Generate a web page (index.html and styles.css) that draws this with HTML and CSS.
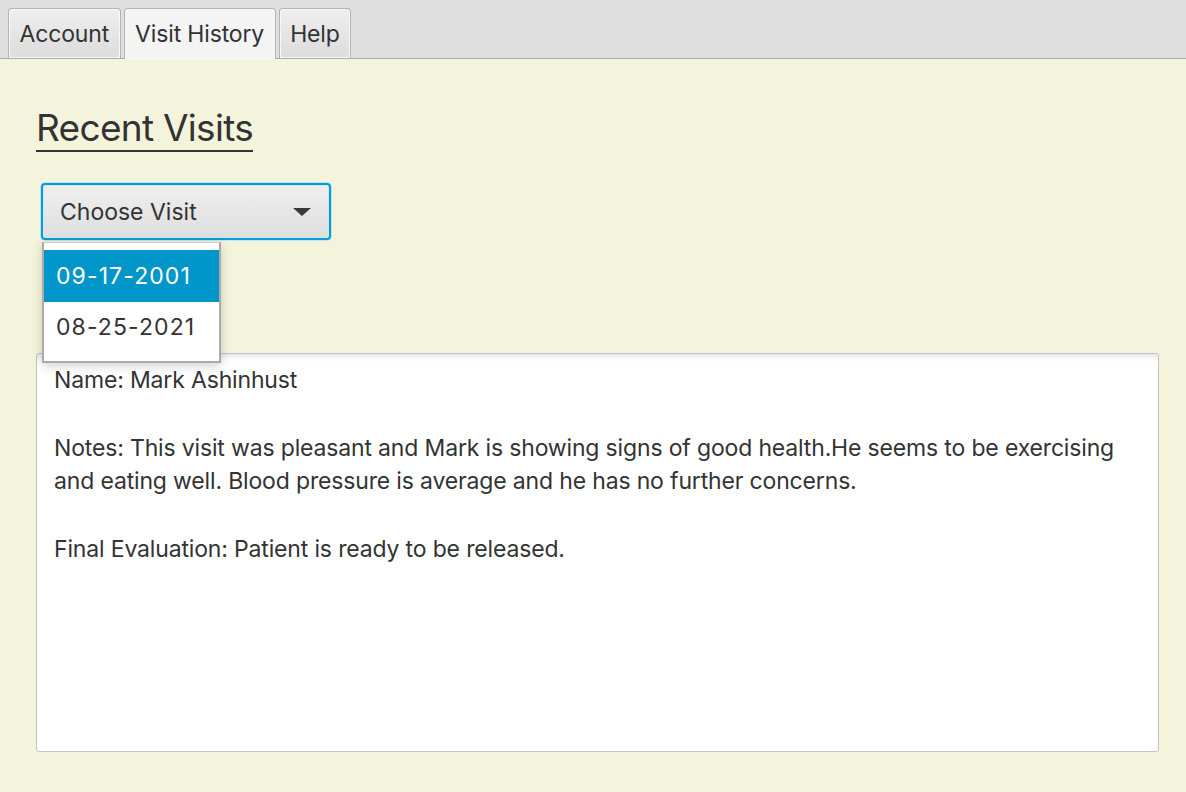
FILE: index.html
```html
<!DOCTYPE html>
<html>
<head>
<meta charset="utf-8">
<link rel="stylesheet" href="styles.css">
</head>
<body>
<div class="tabbar">
  <div class="tab">Account</div>
  <div class="tab selected">Visit History</div>
  <div class="tab">Help</div>
</div>
<main class="content">
  <h1 class="title">Recent Visits</h1>
  <div class="combo-wrap">
    <div class="combo">
      <span>Choose Visit</span>
      <svg class="arrow" width="18" height="8" viewBox="0 0 18 8"><path d="M0 0 H18 L9 8 Z" fill="#3a3a3a"/></svg>
    </div>
    <div class="popup">
      <div class="item sel">09-17-2001</div>
      <div class="item">08-25-2021</div>
    </div>
  </div>
  <div class="textarea">
    <p>Name: Mark Ashinhust</p>
    <p>&nbsp;</p>
    <p>Notes: This visit was pleasant and Mark is showing signs of good health.He seems to be exercising and eating well. Blood pressure is average and he has no further concerns.</p>
    <p>&nbsp;</p>
    <p>Final Evaluation: Patient is ready to be released.</p>
  </div>
</main>
</body>
</html>
```

FILE: styles.css
```css
* { box-sizing: border-box; }
html, body {
  margin: 0;
  height: 100%;
}
body {
  background: #f4f4dc;
  font-family: Inter, "Noto Sans", sans-serif;
  color: #333;
  overflow: hidden;
}
.tabbar {
  height: 59px;
  background: #dfdfdf;
  border-bottom: 1px solid #a9a9a9;
  display: flex;
  align-items: flex-end;
  padding-left: 8px;
  gap: 3px;
}
.tab {
  height: 50px;
  padding: 0 10.5px;
  display: flex;
  align-items: center;
  font-size: 23px;
  letter-spacing: -0.15px;
  color: #333;
  border: 1px solid #b3b3b3;
  border-bottom: none;
  border-radius: 4px 4px 0 0;
  background: linear-gradient(#efefef, #dcdcdc);
  box-shadow: inset 0 0 0 1px #f8f8f8;
}
.tab.selected {
  background: #f4f4f4;
  height: 51px;
  margin-bottom: -1px;
}
.content {
  padding: 0 27px 0 36px;
  position: relative;
}
.title {
  margin: 46px 0 0 0;
  font-size: 37px;
  font-weight: normal;
  line-height: 45px;
  letter-spacing: -0.7px;
  display: inline-block;
  border-bottom: 2px solid #333;
  color: #333;
}
.combo-wrap {
  position: relative;
  margin-top: 31px;
  margin-left: 5px;
  width: 290px;
}
.combo {
  height: 57px;
  border: 2px solid #039ed3;
  border-radius: 4px;
  box-shadow: 0 0 0 1px #bfe4f2, inset 0 0 0 1px #d0e9f3;
  background: linear-gradient(#efefef, #dedede);
  display: flex;
  align-items: center;
  justify-content: space-between;
  padding: 0 18px 0 17px;
  font-size: 23px;
  letter-spacing: 0;
  color: #333;
}
.arrow { display: block; }
.popup {
  position: absolute;
  left: 1px;
  top: 59px;
  width: 179px;
  background: #fff;
  border: 2px solid #aaa;
  border-top: 1px solid #ccc;
  padding: 7px 0 8px 0;
  box-shadow: 0 3px 10px rgba(0,0,0,0.18);
  z-index: 2;
}
.item {
  height: 51.5px;
  display: flex;
  align-items: center;
  padding-left: 12px;
  font-size: 23px;
  letter-spacing: 1.1px;
  color: #333;
}
.item.sel {
  background: #0096c9;
  color: #fff;
}
.textarea {
  margin-top: 113px;
  height: 399px;
  width: 1123px;
  background: #fff;
  border: 1px solid #c4c4c4;
  border-radius: 3px;
  box-shadow: inset 0 6px 6px -4px rgba(0,0,0,0.12);
  padding: 10px 17px;
  font-size: 23px;
  line-height: 33.8px;
  letter-spacing: -0.16px;
  color: #333;
}
.textarea p { margin: 0; }
```
